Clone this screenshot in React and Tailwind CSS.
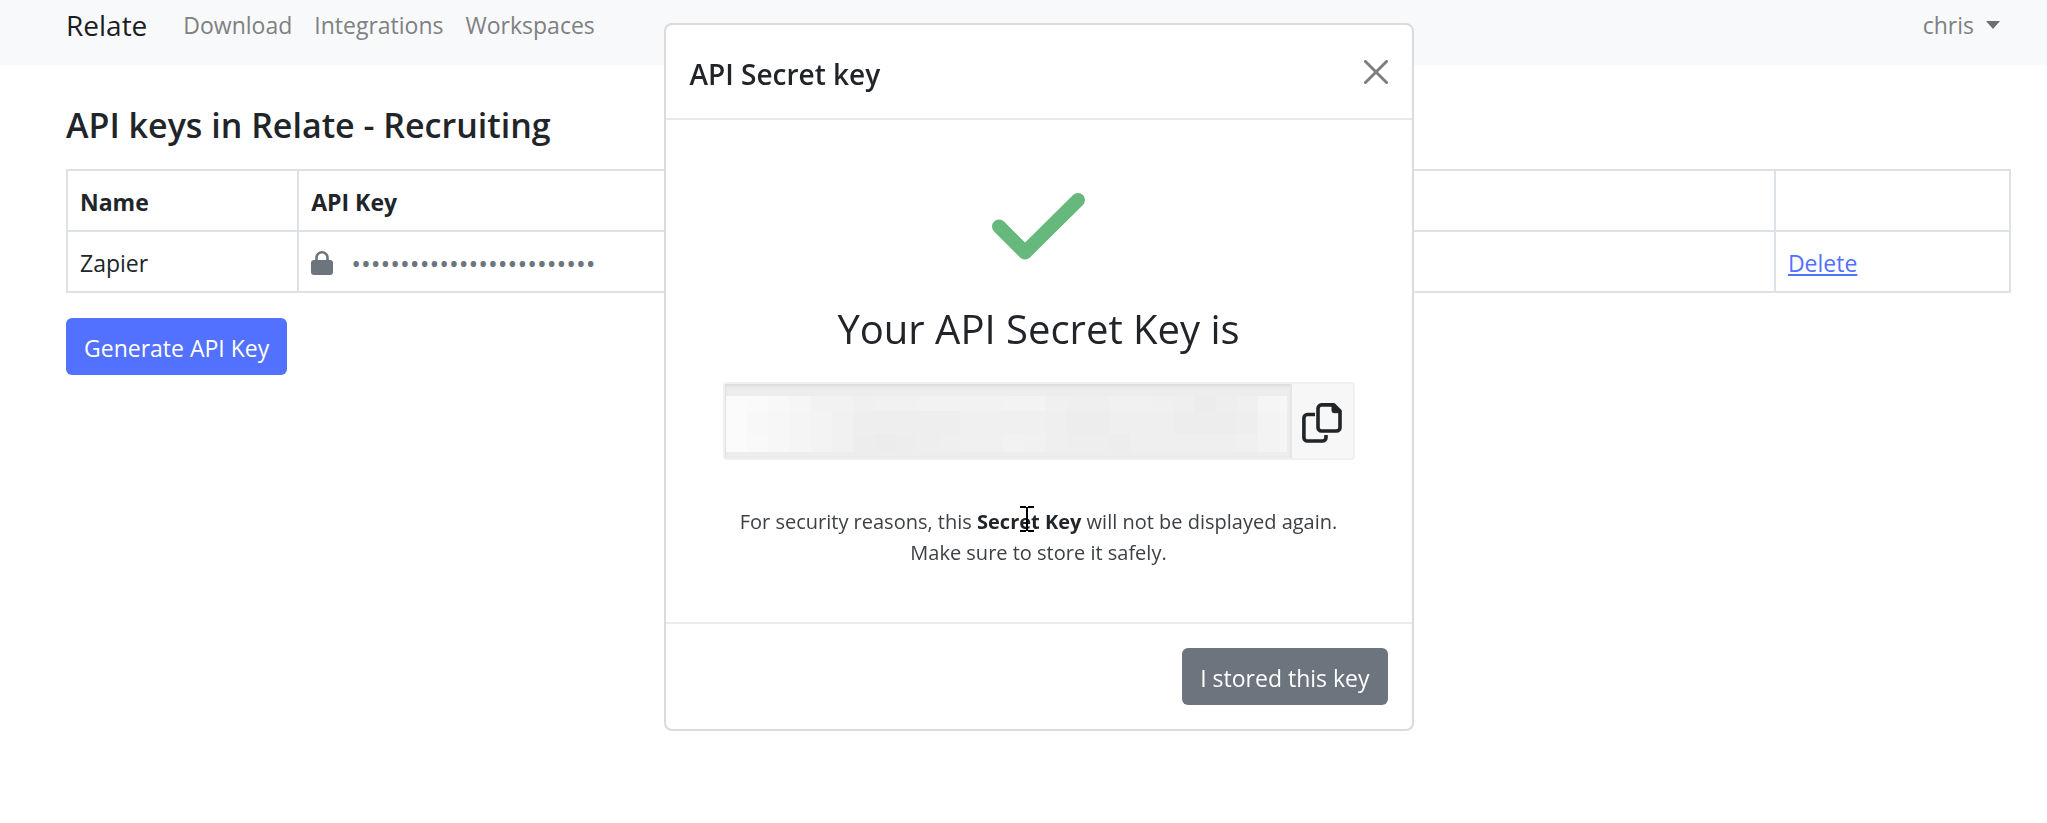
import React from "react";

const mosaic = [
  [251, 250, 248, 246, 242, 242, 240, 241, 241, 242, 242, 242, 242, 243, 243, 240, 239, 239, 241, 241, 240, 239, 236, 238, 240, 245, 247],
  [251, 248, 247, 245, 243, 241, 238, 238, 238, 238, 238, 240, 240, 240, 240, 239, 237, 237, 239, 239, 239, 237, 237, 237, 238, 243, 245],
  [251, 249, 247, 245, 243, 241, 237, 236, 237, 238, 239, 240, 240, 242, 241, 239, 238, 238, 237, 239, 239, 239, 239, 239, 240, 243, 245],
];

const keyDots = "•".repeat(25);

function Navbar() {
  return (
    <nav className="flex h-[65px] items-start bg-[#f8f9fb] pr-[47px] pl-[66px] text-[23px] leading-[50px] text-[#7f8081]">
      <a href="#home" className="mr-9 text-[28px] text-[#1c1d1e]">Relate</a>
      <div className="flex gap-[22px]">
        <a href="#download">Download</a>
        <a href="#integrations">Integrations</a>
        <a href="#workspaces">Workspaces</a>
      </div>
      <button type="button" className="ml-auto flex items-center gap-3">
        chris
        <svg viewBox="0 0 14 8" className="h-2 w-[14px]" fill="#6d6e6f" aria-hidden="true"><path d="M0 0h14L7 8z" /></svg>
      </button>
    </nav>
  );
}

function KeysTable() {
  return (
    <table className="w-full border-collapse border-2 border-[#dee2e6] text-left">
      <colgroup>
        <col className="w-[11.9%]" />
        <col />
        <col className="w-[12.1%]" />
      </colgroup>
      <thead>
        <tr className="h-[61px]">
          <th className="border-2 border-[#dee2e6] px-3 pt-[3px] font-bold">Name</th>
          <th className="border-2 border-[#dee2e6] px-3 pt-[3px] font-bold">API Key</th>
          <td className="border-2 border-[#dee2e6] px-3 pt-[3px]" />
        </tr>
      </thead>
      <tbody>
        <tr className="h-[61px]">
          <td className="border-2 border-[#dee2e6] px-3 pt-[3px]">Zapier</td>
          <td className="border-2 border-[#dee2e6] px-3 pt-[3px]">
            <div className="flex items-center gap-[18px] text-[#6c757d]">
              <svg viewBox="0 0 22 24" className="h-6 w-[22px]" fill="none" aria-hidden="true">
                <rect x="0" y="9" width="22" height="15" rx="3" fill="currentColor" />
                <path d="M5.500 10V6.500a5.500 5.200 0 0 1 11 0V10" stroke="currentColor" strokeWidth="2.600" />
              </svg>
              <span className="text-[26px] leading-8">{keyDots}</span>
            </div>
          </td>
          <td className="border-2 border-[#dee2e6] px-3 pt-[3px]">
            <a href="#delete" className="text-[#5271ff] underline">Delete</a>
          </td>
        </tr>
      </tbody>
    </table>
  );
}

function SecretField() {
  return (
    <div className="mx-[57px] flex h-[78px] rounded border-2 border-[#f0f0f0] bg-[#f7f7f7]">
      <div className="relative flex-1 border-r-2 border-[#e6e6e6]">
        <input readOnly aria-label="API secret key" className="h-full w-full bg-[#ededed] shadow-[inset_1px_2px_3px_#dcdcdc]" />
        <div className="pointer-events-none absolute top-3 right-[3px] bottom-[6px] left-px grid grid-rows-[15fr_22fr_18fr]">
          {mosaic.map((row, r) => (
            <div key={r} className="flex">
              {row.map((v, c) => (
                <span
                  key={c}
                  className={c === row.length - 1 ? "w-[7px]" : "flex-1"}
                  style={{ backgroundColor: `rgb(${v},${v},${v})` }}
                />
              ))}
            </div>
          ))}
        </div>
      </div>
      <button type="button" aria-label="Copy" className="flex w-[61px] items-center justify-center pt-1">
        <svg viewBox="0 0 40 40" className="size-10" fill="none" stroke="#212529" strokeWidth="3.600" strokeLinejoin="round" aria-hidden="true">
          <path d="M19.500 1.900h12.500l6 6v16.600a3.500 3.500 0 0 1-3.500 3.500h-15a3.500 3.500 0 0 1-3.500-3.500V5.400a3.500 3.500 0 0 1 3.500-3.500z" />
          <path d="M30 1.500v6.200a2 2 0 0 0 2 2h6.500V7.500L32.500 1.500z" fill="#212529" strokeWidth="1" />
          <path d="M13 11.500H5.400a3.500 3.500 0 0 0-3.500 3.500v19.500A3.500 3.500 0 0 0 5.400 38h15.100a3.500 3.500 0 0 0 3.500-3.500V32" />
        </svg>
      </button>
    </div>
  );
}

function SecretKeyDialog() {
  return (
    <div className="pointer-events-none fixed inset-0 flex items-start justify-center pt-[23px] pl-[30px]">
      <section role="dialog" aria-labelledby="dialog-title" className="pointer-events-auto w-[750px] rounded-lg border-2 border-[#d9dbdc] bg-white">
        <header className="flex h-[95px] items-center justify-between border-b-2 border-[#e6e9ec] px-6">
          <h2 id="dialog-title" className="pt-1 text-[28px] font-semibold">API Secret key</h2>
          <button type="button" aria-label="Close">
            <svg viewBox="0 0 24 24" className="size-6" stroke="#7f7f7f" strokeWidth="3" strokeLinecap="round" aria-hidden="true">
              <path d="M1.500 1.500l21 21M22.500 1.500l-21 21" />
            </svg>
          </button>
        </header>
        <div className="pt-[73px] pb-[54px] text-center">
          <svg viewBox="0 0 93 67" className="mx-auto mb-10 h-[67px] w-[93px]" fill="none" stroke="#67b87c" strokeWidth="14" strokeLinecap="round" strokeLinejoin="round" aria-hidden="true">
            <path d="M7 33.500L33 59.500L86 7" />
          </svg>
          <h3 className="mb-6 text-[40px] leading-[58px]">Your API Secret Key is</h3>
          <SecretField />
          <p className="mt-[46px] text-[20px] leading-[31px] text-[#3d4145]">
            For security reasons, this{" "}
            <strong className="relative font-bold text-[#212529]">
              Secret Key
              <svg viewBox="0 0 14 26" className="absolute -top-0.5 left-[43px] h-[26px] w-[14px]" stroke="#000" strokeWidth="2" fill="none" aria-hidden="true">
                <path d="M0 1h6M8 1h6M0 25h6M8 25h6M7 1v24" />
              </svg>
            </strong>{" "}
            will not be displayed again.
            <br />
            Make sure to store it safely.
          </p>
        </div>
        <footer className="flex justify-end border-t-2 border-[#e9ebed] p-6">
          <button type="button" className="h-[57px] rounded-md bg-[#6c757d] px-[18px] pt-[3px] text-[23px] text-white">I stored this key</button>
        </footer>
      </section>
    </div>
  );
}

export default function App() {
  return (
    <div className="min-h-screen bg-white font-['Open_Sans',sans-serif] text-[23px] text-[#212529]">
      <Navbar />
      <main className="pt-[35px] pr-[36px] pl-[66px]">
        <h1 className="mb-[19px] text-[34px] leading-[50px] font-semibold">API keys in Relate - Recruiting</h1>
        <KeysTable />
        <button type="button" className="mt-[25px] h-[57px] rounded-md bg-[#5271ff] px-[18px] pt-[3px] text-white">Generate API Key</button>
      </main>
      <SecretKeyDialog />
    </div>
  );
}
